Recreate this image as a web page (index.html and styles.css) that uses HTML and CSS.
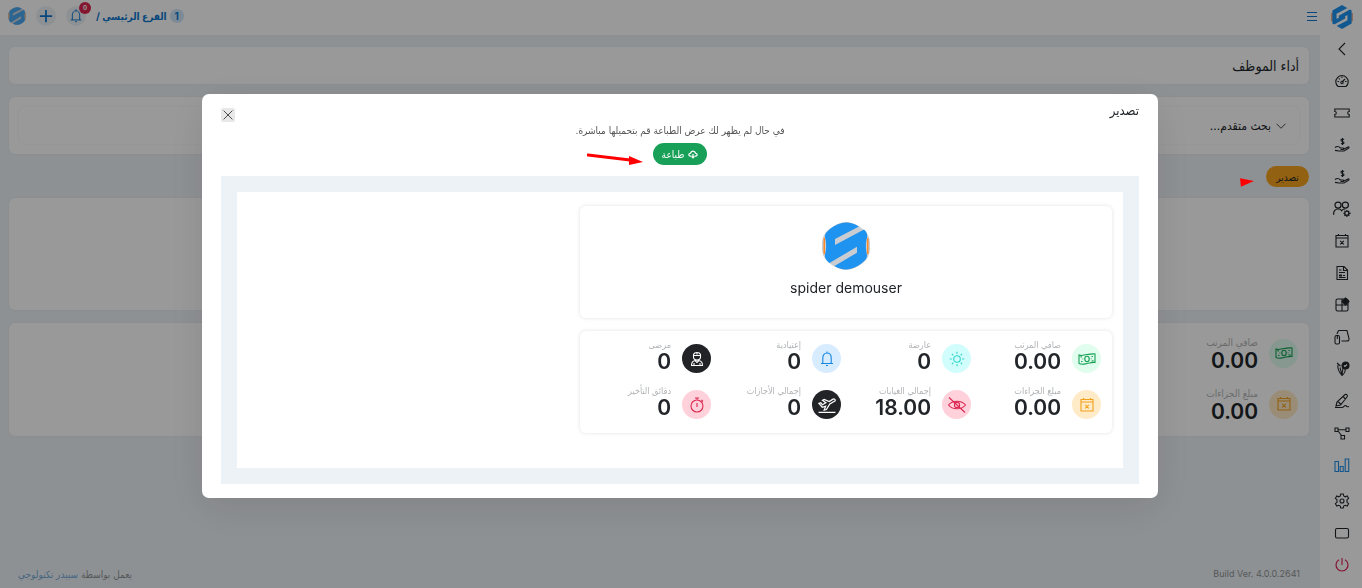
FILE: index.html
```html
<!DOCTYPE html>
<html lang="ar" dir="rtl">
<head>
<meta charset="utf-8">
<meta name="viewport" content="width=device-width, initial-scale=1">
<title>أداء الموظف</title>
<link rel="stylesheet" href="styles.css">
</head>
<body>
<svg class="sprite" aria-hidden="true">
  <symbol id="logo" viewBox="0 0 48 48">
    <path fill="#c9ccd0" d="M24 0c7 0 18 6 22 13 3 7 3 15 0 22-4 7-15 13-22 13S6 42 2 35c-3-7-3-15 0-22C6 6 17 0 24 0z"/>
    <path fill="#ff8a24" d="M1.500 16H3v16H1.500zM45 16h1.500v16H45z"/>
    <path fill="#1f93f0" d="M24 .5c4 0 9 1.500 13 4L13 17v6L42 7.500c3 2.500 3.500 5 3 8-1.500 5-1.500 12 0 17 .5 4-2 6-5 8.500-5 4-11 6.500-16 6.500-4 0-8-1.500-11.500-3.500L35 30.700v-6L7.500 41C4 38 2.500 36 3 32.500c1.500-5 1.500-12 0-17-.5-4 2-6 5-8.500C13 3 19 .5 24 .5z"/>
  </symbol>
  <symbol id="mark" viewBox="0 0 48 52">
    <path fill="#e8b090" d="M0 17h4v18H0zM44 17h4v18h-4z"/>
    <path fill="#1f93f0" d="M24 0l21 12v28L24 52 3 40V12z"/>
    <path fill="#fff" d="M12 19L37 6l5 3-25 14v5l-5 2zM36 33L11 46l-5-3 25-14v-5l5-2z"/>
  </symbol>
  <symbol id="i-back" viewBox="0 0 16 16"><path d="M11 2L5 8l6 6"/></symbol>
  <symbol id="i-gauge" viewBox="0 0 16 16"><path d="M4 13.500a6.200 6.200 0 1 1 8 0zM8 9l3-3M8 3.500V5M3.500 8.500H5M11 8.500h1.500M4.800 5.300l1 1"/><circle cx="8" cy="9.500" r="1.200"/></symbol>
  <symbol id="i-ticket" viewBox="0 0 16 16"><path d="M.8 4h14.400v2.500a1.500 1.500 0 0 0 0 3V12H.8V9.500a1.500 1.500 0 0 0 0-3z"/></symbol>
  <symbol id="i-hand" viewBox="0 0 16 16"><path d="M10 2.500C9 1.500 7 2 7 3.200 7 5 10 4 10 5.800 10 7 8 7.200 7 6.300M8.500 1v7M1 10.500c2-1.500 4-1 5.500.5H9c1 0 1 1.500 0 1.500H6.500M10 12l4-2c1-.4 1.500.8.500 1.300L10 14H5l-4-.6"/></symbol>
  <symbol id="i-users" viewBox="0 0 16 16"><circle cx="4.500" cy="4.500" r="2.700"/><circle cx="11" cy="4.500" r="2.700"/><path d="M.5 13c0-3.500 1.500-5 4-5 1.500 0 2.500.5 3.200 1.500C8.300 8.500 9.500 8 11 8"/><circle cx="12.300" cy="11.800" r="1.800"/><path d="M12.300 8.800V10M12.300 13.600v1.600M9.300 11.800h1.200M14.100 11.800h1.600M10.200 9.700l.8.800M13.600 13.100l.9.900M14.400 9.700l-.8.800M11 13.100l-.8.900"/></symbol>
  <symbol id="i-calx" viewBox="0 0 16 16"><path d="M2 2.500h12v11.500H2zM2 5h12M4.500 1v1.500M11.500 1v1.500M6.200 7.800l3.600 3.600M9.800 7.800l-3.600 3.600"/></symbol>
  <symbol id="i-doc" viewBox="0 0 16 16"><path d="M3 1.500h7l3.500 3.500v9.500H3zM9.500 1.500v4h4M5 5h2.500M5 7.500h6M5 12.500h6.500M5.500 10h2v1h-2zM9 10.500h2"/></symbol>
  <symbol id="i-grid" viewBox="0 0 16 16"><rect x="2" y="2" width="12" height="12" rx="1.500"/><path d="M8 2v12M2 8h12"/><path class="solid" d="M11.500 1L15 4.500 11.500 8 8 4.500z"/></symbol>
  <symbol id="i-device" viewBox="0 0 16 16"><path d="M3 5l1-2.500C4.300 2 4.500 1.500 5 1.500h8l2 8c.2 1.500-.5 2.500-2 2.500H7.500"/><rect x="1" y="6.500" width="4.500" height="8.500" rx="1.500"/><path d="M3.300 7v3"/></symbol>
  <symbol id="i-leaf" viewBox="0 0 16 16"><path d="M3 2l3.500 3M4 4c-1 4 1 7 4 10.500C11 12 11.500 10 11 8M6 6.500l2 7.500 1-7"/><circle class="solid" cx="11.500" cy="4.500" r="3.500"/><path class="tick" d="M10 4.500l1 1 2-2"/></symbol>
  <symbol id="i-pen" viewBox="0 0 16 16"><path d="M2 13L3 9l8-7.500c2-.5 3 1 2 2.500L6.500 12 2 13zM4 8.500l3 3M9 3.500l2.500 2.500M1 14.500h7c2 0 2-2.500 4-2 .5 1.500 1 1.500 3 1"/></symbol>
  <symbol id="i-flow" viewBox="0 0 16 16"><path d="M1 3h3v3.500H1zM12 3h3v3.500h-3zM7 10.500h3.500V14H7zM4 4.700h8M4 6l3.500 4.500"/></symbol>
  <symbol id="i-bars" viewBox="0 0 16 16"><path d="M1 4.500h3.500v10H1zM6.200 9.500h3v5h-3zM11.200 2h3.500v12.500h-3.500z"/></symbol>
  <symbol id="i-gear" viewBox="0 0 16 16"><path d="M6.700 1h2.600l.4 2 1.500.8 2-.8 1.400 2.300L13 6.700v2.600l1.600 1.400-1.400 2.300-2-.7-1.500.8-.4 1.900H6.700l-.4-1.900-1.500-.8-2 .7-1.400-2.300L3 9.300V6.700L1.400 5.300 2.800 3l2 .8L6.300 3z"/><circle cx="8" cy="8" r="2"/></symbol>
  <symbol id="i-rect" viewBox="0 0 16 16"><rect x="1.500" y="3.500" width="13" height="9.500" rx="1.500"/></symbol>
  <symbol id="i-power" viewBox="0 0 16 16"><path d="M8 1v7M5 2.800a6 6 0 1 0 6 0"/></symbol>
  <symbol id="i-menu" viewBox="0 0 16 16"><path d="M3 4.500h10M3 8.500h10M3 12.500h10"/></symbol>
  <symbol id="i-plus" viewBox="0 0 16 16"><path d="M8 1v14M1 8h14"/></symbol>
  <symbol id="i-bell" viewBox="0 0 16 16"><path d="M2 12.500h12M3.800 12.500V7c0-3 1.700-5 4.200-5s4.200 2 4.200 5v5.500M8 .5V2M7 14.500h2"/></symbol>
  <symbol id="i-down" viewBox="0 0 16 16"><path d="M2 5l6 6 6-6"/></symbol>
  <symbol id="i-x" viewBox="0 0 16 16"><path d="M3 3l10 10M13 3L3 13"/></symbol>
  <symbol id="i-cloud" viewBox="0 0 16 16"><path d="M5.500 11.500H4C.5 11.500.5 7 4 6.800 5 2 11 2 12 6.800c3.500.2 3.500 4.700 0 4.700h-1.500M8 8v6M6 12l2 2 2-2"/></symbol>
  <symbol id="i-cash" viewBox="0 0 18 16"><path d="M1 4c3.500 1.500 5-.5 8-.5s5-1 8-.5v8.500c-3-.5-5 .5-8 1s-5 1.500-8 0z"/><ellipse cx="9" cy="8" rx="2.200" ry="2.700"/><path d="M3 6.500V5.800h1M3 10.500h1.500M15 9.200V10h-1.500M15 5.500h-1.500M4.500 8h.8M13.500 7.700h-.8"/></symbol>
  <symbol id="i-sun" viewBox="0 0 16 16"><circle cx="8" cy="8" r="3.300"/><path d="M8 .8v2M8 13.200v2M.8 8h2M13.200 8h2M2.900 2.900l1.400 1.400M11.700 11.700l1.400 1.400M13.100 2.900l-1.400 1.400M4.300 11.700l-1.400 1.400"/></symbol>
  <symbol id="i-nurse" viewBox="0 0 16 16"><path d="M4.500 3.500C5.500.8 10.500.8 11.500 3.500v3C11 10 5 10 4.500 6.500zM4.500 4.500h7M8 1.500v2M2.500 14.500c0-3 1-4.500 3.500-5l2 2 2-2c2.500.5 3.500 2 3.500 5zM5 12v2.500M10 13h2"/></symbol>
  <symbol id="i-eye" viewBox="0 0 18 16"><path d="M.5 8C4.500 3 13.500 3 17.500 8 13.500 13 4.500 13 .5 8zM1 .5l16 15"/><circle cx="9" cy="8" r="2.600"/></symbol>
  <symbol id="i-plane" viewBox="0 0 16 16"><path d="M.5 14.500h15M.8 6.500l3 3.500 3-1L5.500 12.500l2-.5 3-5 4.500-2.500c1-1-.5-2.500-2-1.500L10 5 5.500 3l-1.500.8L7 6 4 7.800 2.500 6z"/></symbol>
  <symbol id="i-timer" viewBox="0 0 16 16"><circle cx="8" cy="9" r="6"/><path d="M6 1h4M8 6v4M8 1v1.500M12.500 3l1.500 1.500"/></symbol>
</svg>

<div class="app">
  <aside class="sidebar">
    <a class="brand" href="#" aria-label="الرئيسية"><svg><use href="#mark"/></svg></a>
    <nav class="nav">
      <a href="#" aria-label="رجوع"><svg class="icon"><use href="#i-back"/></svg></a>
      <a href="#" aria-label="لوحة التحكم"><svg class="icon"><use href="#i-gauge"/></svg></a>
      <a href="#" aria-label="التذاكر"><svg class="icon"><use href="#i-ticket"/></svg></a>
      <a href="#" aria-label="المبيعات"><svg class="icon"><use href="#i-hand"/></svg></a>
      <a href="#" aria-label="المشتريات"><svg class="icon"><use href="#i-hand"/></svg></a>
      <a href="#" aria-label="الموظفون"><svg class="icon large"><use href="#i-users"/></svg></a>
      <a href="#" aria-label="الإجازات"><svg class="icon"><use href="#i-calx"/></svg></a>
      <a href="#" aria-label="المستندات"><svg class="icon"><use href="#i-doc"/></svg></a>
      <a href="#" aria-label="التطبيقات"><svg class="icon"><use href="#i-grid"/></svg></a>
      <a href="#" aria-label="الأجهزة"><svg class="icon"><use href="#i-device"/></svg></a>
      <a href="#" aria-label="الموافقات"><svg class="icon"><use href="#i-leaf"/></svg></a>
      <a href="#" aria-label="التوقيع"><svg class="icon"><use href="#i-pen"/></svg></a>
      <a href="#" aria-label="سير العمل"><svg class="icon"><use href="#i-flow"/></svg></a>
      <a href="#" class="active" aria-label="التقارير"><svg class="icon"><use href="#i-bars"/></svg></a>
    </nav>
    <nav class="nav nav-tools">
      <a href="#" aria-label="الإعدادات"><svg class="icon"><use href="#i-gear"/></svg></a>
      <a href="#" aria-label="الشاشة"><svg class="icon"><use href="#i-rect"/></svg></a>
      <a href="#" class="danger" aria-label="خروج"><svg class="icon"><use href="#i-power"/></svg></a>
    </nav>
  </aside>

  <div class="page">
    <header class="topbar">
      <button class="blue" aria-label="القائمة"><svg class="icon"><use href="#i-menu"/></svg></button>
      <div class="topbar-end">
        <a class="branch" href="#"><span class="count">1</span><span>الفرع الرئيسي /</span></a>
        <button class="round blue" aria-label="التنبيهات"><svg class="icon"><use href="#i-bell"/></svg><span class="badge">0</span></button>
        <button class="round blue add" aria-label="إضافة"><svg class="icon"><use href="#i-plus"/></svg></button>
        <svg class="avatar"><use href="#logo"/></svg>
      </div>
    </header>

    <main class="content">
      <section class="card title-card"><h1>أداء الموظف</h1></section>
      <section class="card search-card">
        <button class="search"><svg class="icon"><use href="#i-down"/></svg><span>بحث متقدم...</span></button>
      </section>
      <div class="actions">
        <button class="export">تصدير</button>
        <svg class="pointer" viewBox="0 0 15 9"><path d="M0 0l15 3L1 9z" fill="#f00"/></svg>
      </div>
      <section class="card profile-slot"></section>
      <section class="card totals">
        <div class="stat"><span class="disc green"><svg class="icon large"><use href="#i-cash"/></svg></span><div><p>صافي المرتب</p><strong>0.00</strong></div></div>
        <div class="stat"><span class="disc orange"><svg class="icon"><use href="#i-calx"/></svg></span><div><p>مبلغ الجزاءات</p><strong>0.00</strong></div></div>
      </section>
    </main>

    <footer class="footer">
      <span class="version" dir="ltr">Build Ver. 4.0.0.2641</span>
      <span>يعمل بواسطة <a href="#">سبيدر تكنولوجي</a></span>
    </footer>
  </div>
</div>

<div class="overlay">
  <div class="modal" role="dialog" aria-modal="true" aria-labelledby="modal-title">
    <div class="modal-head">
      <h2 id="modal-title">تصدير</h2>
      <button class="close" aria-label="إغلاق"><svg class="icon"><use href="#i-x"/></svg></button>
    </div>
    <p class="hint">في حال لم يظهر لك عرض الطباعة قم بتحميلها مباشرة.</p>
    <div class="print-row">
      <button class="print"><svg class="icon"><use href="#i-cloud"/></svg><span>طباعة</span></button>
      <svg class="arrow" viewBox="0 0 56 13"><path d="M1 3l42 5" stroke="#f00" stroke-width="3" stroke-linecap="round"/><path d="M42 4l14 6-14 3z" fill="#f00"/></svg>
    </div>
    <div class="preview">
      <div class="sheet">
        <div class="report">
          <section class="panel person">
            <svg class="photo"><use href="#logo"/></svg>
            <h3 dir="ltr">spider demouser</h3>
          </section>
          <section class="panel stats">
            <div class="stat"><span class="disc green"><svg class="icon large"><use href="#i-cash"/></svg></span><div><p>صافي المرتب</p><strong>0.00</strong></div></div>
            <div class="stat"><span class="disc cyan"><svg class="icon"><use href="#i-sun"/></svg></span><div><p>عارضة</p><strong>0</strong></div></div>
            <div class="stat"><span class="disc sky"><svg class="icon"><use href="#i-bell"/></svg></span><div><p>إعتيادية</p><strong>0</strong></div></div>
            <div class="stat"><span class="disc dark"><svg class="icon"><use href="#i-nurse"/></svg></span><div><p>مرضى</p><strong>0</strong></div></div>
            <div class="stat"><span class="disc orange"><svg class="icon"><use href="#i-calx"/></svg></span><div><p>مبلغ الجزاءات</p><strong>0.00</strong></div></div>
            <div class="stat"><span class="disc pink"><svg class="icon large"><use href="#i-eye"/></svg></span><div><p>إجمالي الغيابات</p><strong>18.00</strong></div></div>
            <div class="stat"><span class="disc dark"><svg class="icon large"><use href="#i-plane"/></svg></span><div><p>إجمالي الأجازات</p><strong>0</strong></div></div>
            <div class="stat"><span class="disc pink"><svg class="icon"><use href="#i-timer"/></svg></span><div><p>دقائق التأخير</p><strong>0</strong></div></div>
          </section>
        </div>
      </div>
    </div>
  </div>
</div>
</body>
</html>
```
FILE: styles.css
```css
* { box-sizing: border-box; }
body {
  margin: 0;
  background: #edf2f6;
  color: #212529;
  font: 10px/16px Inter, "DejaVu Sans Condensed", "DejaVu Sans", sans-serif;
}
h1, h2, h3, p { margin: 0; font-weight: 400; }
button { border: 0; margin: 0; padding: 0; background: none; color: inherit; font: inherit; cursor: pointer; }
a { color: inherit; text-decoration: none; }
.sprite { position: absolute; width: 0; height: 0; }
.icon { width: 16px; height: 16px; fill: none; stroke: currentColor; stroke-width: 1.100; flex: none; display: block; }
.icon.large { width: 18px; height: 18px; }
.solid { fill: currentColor; }
.tick { stroke: #fff; }

.app { display: flex; min-height: 100vh; }
.sidebar { width: 42px; flex: none; padding-left: 2px; background: #fff; display: flex; flex-direction: column; align-items: center; }
.brand { height: 33px; display: flex; align-items: center; }
.brand svg { width: 22px; height: 24px; }
.nav a { width: 32px; height: 32px; display: flex; align-items: center; justify-content: center; }
.nav a.active { color: #1f8fe8; }
.nav a.danger { color: #d81b4f; }
.nav-tools { margin-top: 4px; }

.page { flex: 1; min-width: 0; display: flex; flex-direction: column; }
.topbar { height: 35px; padding: 0 0 3px 8px; background: #fff; display: flex; align-items: center; justify-content: space-between; }
.topbar-end { display: flex; align-items: center; gap: 10px; }
.blue, .branch { color: #0b76cf; }
.branch { display: flex; align-items: center; gap: 3px; font-weight: 700; }
.count { width: 14px; height: 14px; line-height: 14px; border-radius: 50%; background: #cfe6fa; text-align: center; }
.round { position: relative; width: 20px; height: 20px; border-radius: 50%; background: #edf2f6; display: grid; place-items: center; }
.round .icon { width: 14px; height: 14px; }
.add .icon { stroke-width: 2; }
.badge { position: absolute; top: -4px; right: -5px; width: 12px; height: 12px; border-radius: 50%; background: #dc2650; color: #fff; font-size: 6px; font-weight: 700; line-height: 12px; text-align: center; }
.avatar { width: 18px; height: 20px; opacity: .8; }

.content { padding: 12px 11px 0 9px; display: flex; flex-direction: column; }
.card { background: #fff; border-radius: 6px; box-shadow: 0 0 3px #0000000d; }
.title-card { padding: 10px; margin-bottom: 13px; }
h1 { font-size: 14px; line-height: 17px; }
.search-card { padding: 10px; }
.search { width: 100%; height: 37px; padding: 0 12px; border-radius: 6px; box-shadow: 0 0 3px #0000000f; font-size: 12px; display: flex; align-items: center; gap: 4px; }
.search .icon { width: 12px; height: 12px; }
.actions { display: flex; align-items: center; gap: 12px; margin: 12px 0 11px; }
.export { width: 43px; height: 21px; border-radius: 11px; background: #f6a21e; }
.pointer { position: relative; z-index: 3; width: 14px; height: 9px; margin-top: 12px; }
.profile-slot { height: 112px; margin-bottom: 13px; }
.totals { padding: 11px 11px 13px; display: grid; gap: 13px; }
.stat { display: flex; align-items: flex-end; gap: 11px; }
.stat p { font-size: 9px; line-height: 12px; color: #b0b3b6; white-space: nowrap; text-align: right; }
.stat strong { display: block; font-size: 21px; line-height: 22px; font-weight: 600; text-align: right; }
.totals .stat { align-items: center; }
.totals .stat p { font-size: 10px; line-height: 16px; }
.disc { width: 29px; height: 29px; border-radius: 50%; display: grid; place-items: center; flex: none; }
.green { background: #e0fdee; color: #17a054; }
.orange { background: #ffebc8; color: #f2a01c; }
.cyan { background: #d2fdfd; color: #2bd4c8; }
.sky { background: #d8ecff; color: #1787e0; }
.dark { background: #212327; color: #fff; }
.pink { background: #ffd1da; color: #dc2650; }
.footer { margin-top: auto; padding: 0 20px 6px 18px; display: flex; justify-content: space-between; color: #8f9295; }
.footer a { color: #74a9d6; }
.version { font-size: 9px; }

.overlay { position: fixed; inset: 0; z-index: 2; background: #0006; display: flex; justify-content: center; align-items: flex-start; padding: 94px 204px 0 202px; }
.modal { width: 100%; max-width: 956px; padding: 8px 19px 14px; background: #fff; border-radius: 7px; box-shadow: 0 10px 40px #0000001a; }
.modal-head { display: flex; justify-content: space-between; align-items: flex-start; }
h2 { font-size: 13px; line-height: 17px; }
.close { width: 14px; height: 14px; margin-top: 6px; border-radius: 2px; background: #e8e8e8; color: #444; display: grid; place-items: center; }
.close .icon { width: 14px; height: 14px; }
.hint { text-align: center; line-height: 16px; color: #555; }
.print-row { position: relative; display: flex; justify-content: center; margin: 5px 0 11px; }
.print { height: 22px; padding: 0 9px; border-radius: 11px; background: #18a058; color: #fff; display: flex; align-items: center; gap: 4px; }
.print .icon { width: 10px; height: 10px; stroke-width: 2; }
.arrow { position: absolute; right: calc(50% + 37px); top: 9px; width: 56px; height: 13px; }
.preview { padding: 16px; background: #edf2f6; }
.sheet { min-height: 276px; padding: 14px 11px; background: #fff; }
.report { max-width: 532px; display: grid; gap: 13px; }
.panel { border-radius: 6px; box-shadow: 0 0 4px #0000001f; }
.person { padding: 16px 0 20px; display: flex; flex-direction: column; align-items: center; gap: 8px; }
.photo { width: 48px; height: 48px; }
h3 { font-size: 14px; line-height: 20px; }
.stats { padding: 8px 11px 14px; display: grid; grid-template-columns: repeat(4, 1fr); column-gap: 10px; row-gap: 12px; }
```
